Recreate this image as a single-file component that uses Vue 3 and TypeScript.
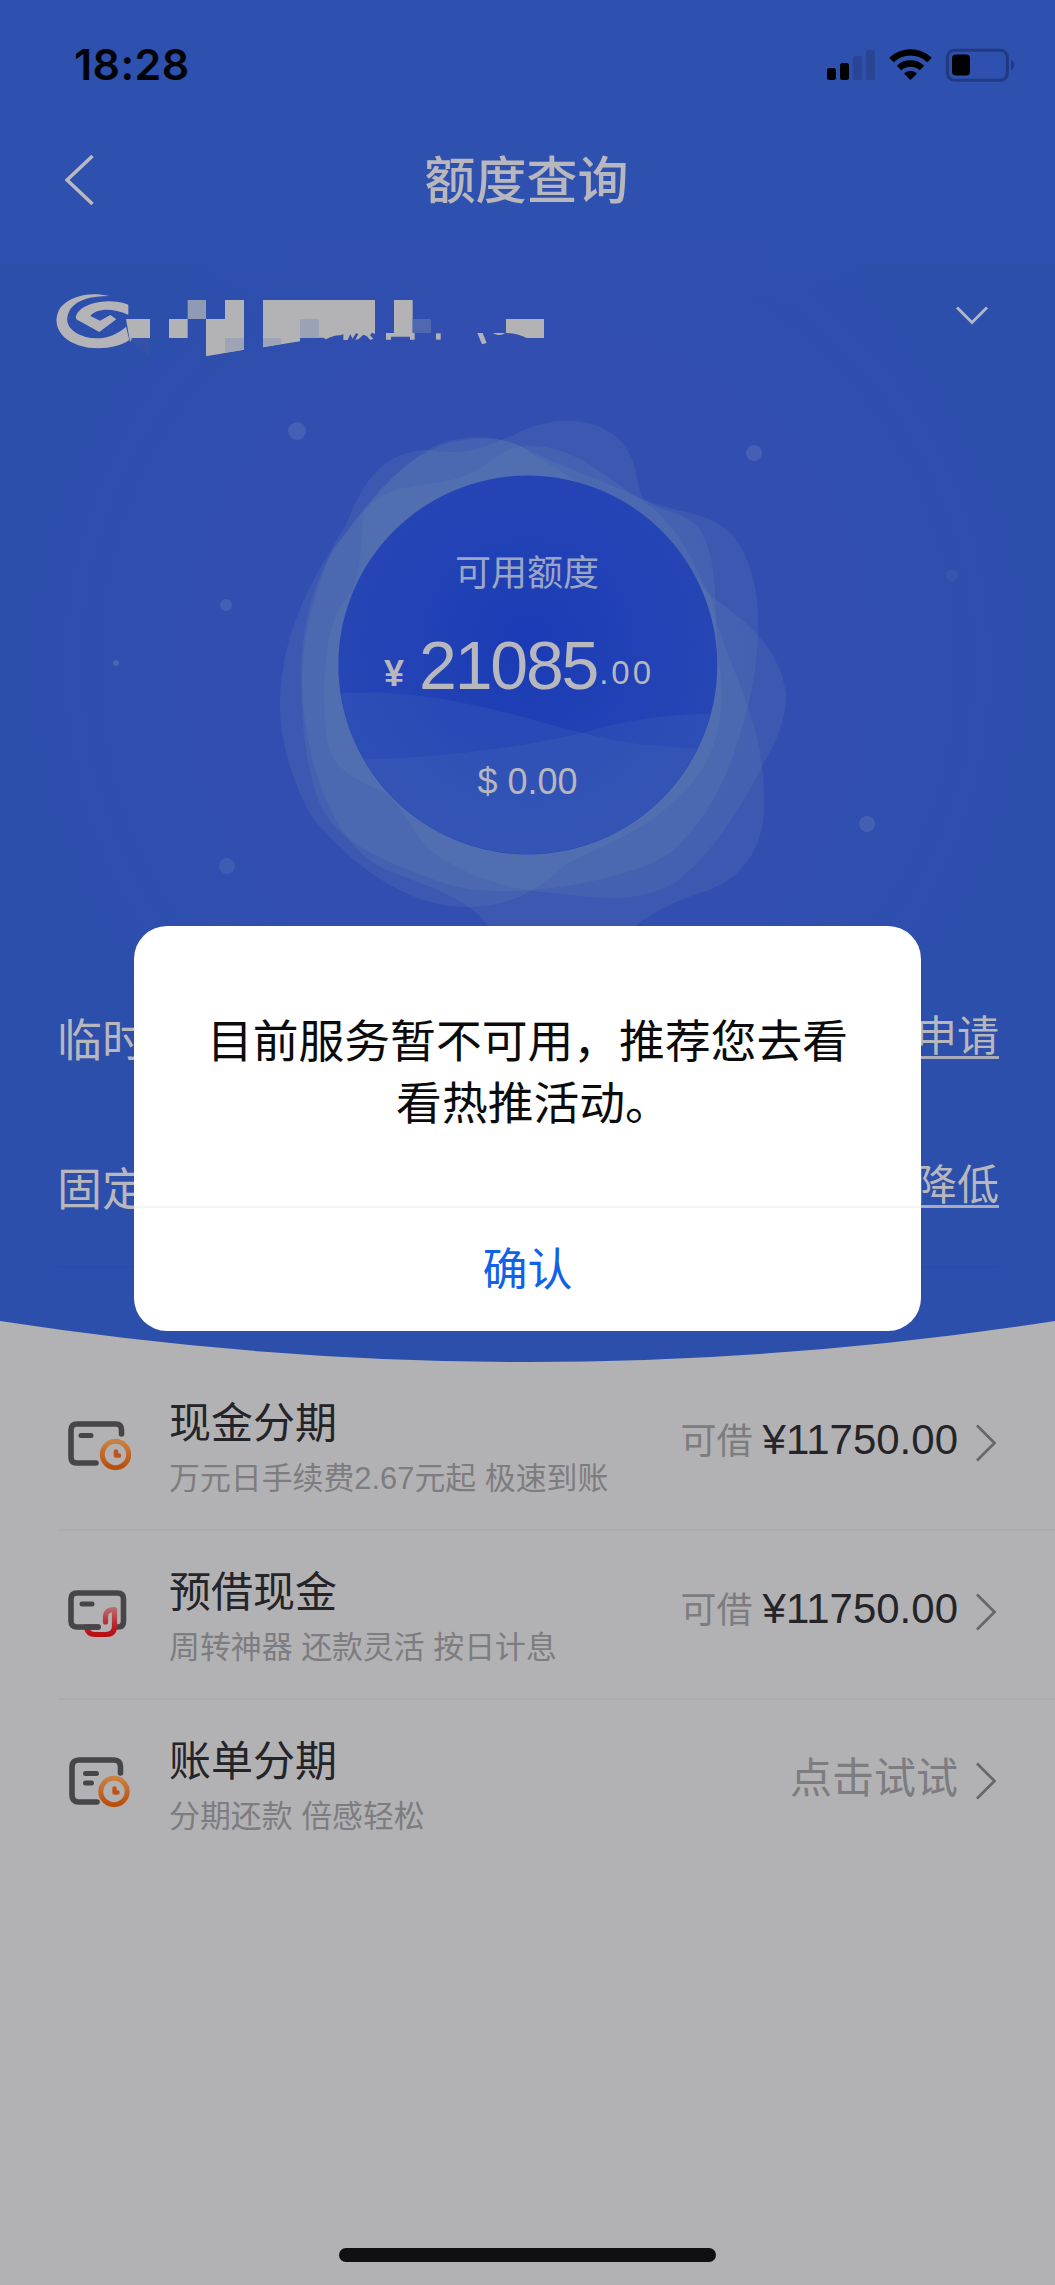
<script setup lang="ts">
interface Product {
  icon: 'cash' | 'advance' | 'bill'
  title: string
  desc: string
  amount?: string
}

const limits = [
  { label: '临时', action: '申请' },
  { label: '固定', action: '降低' },
]

const products: Product[] = [
  { icon: 'cash', title: '现金分期', desc: '万元日手续费2.67元起 极速到账', amount: '¥11750.00' },
  { icon: 'advance', title: '预借现金', desc: '周转神器 还款灵活 按日计息', amount: '¥11750.00' },
  { icon: 'bill', title: '账单分期', desc: '分期还款 倍感轻松' },
]

const dots = [
  { x: 297, y: 431, r: 9, o: 0.17 },
  { x: 754, y: 453, r: 8, o: 0.17 },
  { x: 226, y: 605, r: 6, o: 0.16 },
  { x: 952, y: 575, r: 6, o: 0.07 },
  { x: 116, y: 663, r: 3, o: 0.22 },
  { x: 227, y: 866, r: 8, o: 0.13 },
  { x: 867, y: 824, r: 8, o: 0.17 },
]
</script>

<template>
  <div class="screen">
    <section class="hero">
      <svg class="backdrop" width="1055" height="1365" viewBox="0 0 1055 1365">
        <defs>
          <radialGradient id="glow" gradientUnits="userSpaceOnUse" cx="528" cy="665" r="520">
            <stop offset="0" stop-color="#344eb3" />
            <stop offset=".6" stop-color="#324eb1" />
            <stop offset="1" stop-color="#2c4fab" />
          </radialGradient>
          <linearGradient id="bar" x1="0" y1="0" x2="0" y2="1">
            <stop offset="0" stop-color="#2e50ae" />
            <stop offset=".8" stop-color="#2e50ae" />
            <stop offset="1" stop-color="#2e50ae" stop-opacity="0" />
          </linearGradient>
          <radialGradient id="core" gradientUnits="userSpaceOnUse" cx="528" cy="645" r="210">
            <stop offset="0" stop-color="#1b3bb6" />
            <stop offset="1" stop-color="#2747b5" />
          </radialGradient>
          <clipPath id="disc"><circle cx="527.800" cy="665" r="189" /></clipPath>
        </defs>
        <path d="M0 0H1055V1321Q790 1362 528 1362T0 1321Z" fill="url(#glow)" />
        <rect width="1055" height="300" fill="url(#bar)" />
        <circle v-for="d in dots" :key="d.x" :cx="d.x" :cy="d.y" :r="d.r" fill="#a5b9d2" :opacity="d.o" />
        <g transform="translate(250 400) scale(.3571 .3448)" fill="#7591b4" fill-opacity=".155">
          <path d="M270 360C310 250 370 140 510 145C620 165 660 130 735 103C830 50 950 40 1030 110C1090 170 1075 230 1100 285C1150 330 1230 320 1265 385C1310 470 1300 580 1310 740C1340 900 1310 1050 1200 1150C1100 1260 960 1300 880 1350C790 1440 700 1480 560 1468C380 1440 250 1300 180 1220C100 1080 70 930 90 800C110 620 200 480 270 360Z" />
          <path d="M235 430C300 340 360 250 450 180C520 110 650 80 770 140C860 190 960 220 1100 288C1230 340 1300 320 1365 410C1440 530 1430 700 1405 840C1360 1050 1300 1200 1180 1310C1060 1400 700 1460 540 1400C400 1350 250 1290 200 1180C140 1040 130 800 165 640C185 560 200 500 235 430Z" />
          <path d="M320 320C390 240 460 260 570 230C680 200 680 140 780 132C900 135 970 200 1080 280C1210 360 1240 480 1290 570C1410 650 1490 740 1502 860C1495 980 1440 1040 1400 1130C1340 1230 1290 1320 1190 1400C1070 1470 950 1440 800 1425C680 1410 540 1350 480 1280C430 1200 430 1190 380 1140C300 1100 230 1080 215 980C200 850 205 700 250 600C320 540 310 400 320 320Z" />
          <path d="M235 430C300 350 400 190 510 145C560 110 720 90 780 150C990 280 1190 420 1290 570C1330 780 1440 900 1440 1170C1440 1290 1390 1390 1260 1430C1150 1470 1110 1500 1060 1540L680 1540C620 1460 580 1440 400 1370C230 1310 160 1050 145 850C135 660 180 530 235 430Z" />
        </g>
        <circle cx="527.800" cy="665" r="189.500" fill="url(#core)" />
        <g clip-path="url(#disc)">
          <g transform="translate(250 400) scale(.3571 .3448)" fill="#5276b6" fill-opacity=".17">
            <path d="M230 852C500 830 700 905 930 965C1060 1000 1170 1012 1340 1010V1400H230Z" />
            <path d="M230 1043C500 1045 750 1010 930 965C1050 930 1180 905 1340 912V1400H230Z" />
          </g>
        </g>
        <rect x="58" y="1266" width="940" height="2" fill="#284bb2" opacity=".35" />
      </svg>

      <header class="status">
        <span class="time">18:28</span>
        <svg width="190" height="36" viewBox="826 46 190 36">
          <rect x="827" y="68" width="9" height="12" rx="2.5" />
          <rect x="840" y="63" width="9" height="17" rx="2.5" />
          <g fill="#2a4594">
            <rect x="853" y="56" width="9" height="24" rx="2.5" />
            <rect x="866" y="50" width="9" height="30" rx="2.5" />
          </g>
          <g fill="none" stroke="#000" stroke-width="6.4">
            <path d="M891.5 60A27.5 27.5 0 0 1 929.5 60" />
            <path d="M899 68A17 17 0 0 1 922 68" />
          </g>
          <path d="M904 73.5A10 10 0 0 1 917 73.5L910.5 80Z" />
          <rect x="947.4" y="50.2" width="60" height="30" rx="7" fill="none" stroke="#213a82" stroke-width="3" />
          <rect x="952" y="54.500" width="18" height="21" rx="4" />
          <path d="M1011 59.500Q1018 65 1011 70.500Z" fill="#213a82" />
        </svg>
      </header>

      <nav class="nav">
        <svg width="30" height="52" viewBox="0 0 30 52"><path d="M27.500 2L2 26L27.500 50" fill="none" stroke="#b9b9bf" stroke-width="3.600" /></svg>
        <h1>额度查询</h1>
      </nav>

      <div class="account">
        <svg width="520" height="90" viewBox="0 0 1560 270">
          <path d="M207 48C150 34 90 48 62 82C30 130 60 190 145 203C195 208 240 200 268 180L258 140C225 170 180 182 137 171C85 155 68 123 93 85C115 58 155 48 207 48Z" fill="#b3b3b8" />
          <path d="M265 74C210 54 145 66 118 92C104 107 106 116 114 121L178 156L229 118L211 105L180 122L151 108C170 84 215 83 265 104Z" fill="#b3b3b8" />
          <path d="M274 174H330V228Q300 215 274 182Z" fill="#3451a8" />
          <g fill="#b3b3b5">
            <path d="M258 117H330V174H275L272 187L268 174Z" />
            <path d="M387 117H443V174H387Z" />
            <path d="M555 60H612V209L498 229V117H555Z" />
            <path d="M669 60H1005V162L996 158L990 166L1000 176L991 180L980 168L970 164L955 178L946 179L955 162L948 160L937 176L931 162L923 180H910V163L900 166Q880 166 858 178L850 173H780V184L669 202Z" />
            <path d="M1062 60H1118V159H1124V179H1110V170H1053V179H1038V159H1062Z" />
            <path d="M1188 160H1202V179H1188Z" />
            <path d="M1312 159H1328L1340 189L1326 193Z" />
            <path d="M1358 159H1396Q1378 171 1358 159Z" />
            <path d="M1398 117H1512V174H1460Q1430 159 1398 159Z" />
          </g>
          <g fill="#8f9ab5">
            <path d="M443 60H498V117H443Z" />
            <path d="M555 174H612V209L555 218Z" fill="#9ea3b6" />
            <path d="M669 174H724V192L669 201Z" fill="#9ea3b6" />
            <path d="M780 117H837V174H780Z" fill="#9aa2b6" />
            <path d="M1118 117H1173V159H1118Z" fill="#4f68af" />
          </g>
        </svg>
        <svg width="34" height="20" viewBox="0 0 34 20"><path d="M2 2.500L17 17.500L32 2.500" fill="none" stroke="#b3b8c5" stroke-width="2.800" /></svg>
      </div>

      <div class="balance">
        <span class="caption">可用额度</span>
        <div class="amount"><b>¥</b><span class="whole">21085</span><span class="cents">.00</span></div>
        <span class="usd">$ 0.00</span>
      </div>

      <div class="limits">
        <div v-for="l in limits" :key="l.label" class="limit">
          <span>{{ l.label }}</span>
          <a>{{ l.action }}</a>
        </div>
      </div>
    </section>

    <ul class="products">
      <li v-for="p in products" :key="p.title">
        <svg class="icon" :class="p.icon" width="66" height="58" viewBox="0 0 66 58" fill="none" stroke-linecap="round" stroke-linejoin="round">
          <defs>
            <linearGradient id="orange" x1="0" y1="0" x2="0" y2="1"><stop stop-color="#c98142" /><stop offset="1" stop-color="#b94f0c" /></linearGradient>
            <linearGradient id="red" gradientUnits="userSpaceOnUse" x1="0" y1="20" x2="0" y2="48"><stop stop-color="#b86868" /><stop offset=".6" stop-color="#bd2026" /><stop offset="1" stop-color="#b80c10" /></linearGradient>
          </defs>
          <template v-if="p.icon === 'cash'">
            <path d="M53.500 14V10Q53.500 4 48 4H9Q3 4 3 10V37Q3 43 9 43H28" stroke="#474549" stroke-width="5.600" />
            <path d="M13 15.500H23" stroke="#474549" stroke-width="5" />
            <circle cx="47.500" cy="34.500" r="13.200" stroke="url(#orange)" stroke-width="5" />
            <path d="M48 31.500V35.500H51" stroke="#bd5419" stroke-width="4.500" />
          </template>
          <template v-else-if="p.icon === 'advance'">
            <path d="M30 38H9Q3 38 3 32V10Q3 4 9 4H49.500Q55.500 4 55.500 10V32Q55.500 38 50 38H48" stroke="#474549" stroke-width="5.600" />
            <path d="M14 15H24" stroke="#474549" stroke-width="5" />
            <path d="M37.500 33V27Q38 20.500 46.500 20.500V38Q46 45.500 38 45.500H27Q20 45.500 18.500 39" stroke="url(#red)" stroke-width="5.200" />
            <path d="M18 38H30" stroke="#474549" stroke-width="5.600" />
          </template>
          <template v-else>
            <path d="M52.500 17V11Q52.500 4 46 4H11Q4 4 4 11V39Q4 46 11 46H29" stroke="#474549" stroke-width="5.600" />
            <path d="M17.500 17.500H28.500M17.500 27H23.500" stroke="#474549" stroke-width="5" />
            <circle cx="46" cy="35.500" r="13.200" stroke="url(#orange)" stroke-width="5" />
            <path d="M46.500 32.500V36.500H49.500" stroke="#bd5419" stroke-width="4.500" />
          </template>
        </svg>
        <div class="info">
          <strong>{{ p.title }}</strong>
          <small>{{ p.desc }}</small>
        </div>
        <div class="value">
          <template v-if="p.amount"><em>可借</em><span>{{ p.amount }}</span></template>
          <i v-else>点击试试</i>
        </div>
        <svg class="arrow" width="21" height="38" viewBox="0 0 21 38"><path d="M1 1.500L18.500 19L1 36.500" fill="none" stroke="#68686c" stroke-width="2.800" /></svg>
      </li>
    </ul>

    <div class="home"></div>

    <div class="dialog">
      <p>目前服务暂不可用，推荐您去看<br /><span class="second">看热推活动。</span></p>
      <button>确认</button>
    </div>
  </div>
</template>

<style>
body {
  background: #b2b2b4;
}
</style>

<style scoped>
.screen {
  position: relative;
  display: flex;
  flex-direction: column;
  width: 1055px;
  height: 2285px;
  overflow: hidden;
  background: #b2b2b4;
  font-family: 'Liberation Sans', 'Noto Sans CJK SC', sans-serif;
}
.hero {
  position: relative;
  height: 1362px;
  color: #b7b7bd;
}
.hero > * {
  position: relative;
}
.hero > .backdrop {
  position: absolute;
  left: 0;
  top: 0;
}
.status {
  display: flex;
  justify-content: space-between;
  align-items: center;
  height: 128px;
  padding: 0 39px 0 74px;
}
.time {
  color: #020307;
  font: 600 43px/50px Inter, sans-serif;
  letter-spacing: 0.400px;
}
.nav {
  display: flex;
  align-items: center;
  height: 104px;
  padding: 0 65px;
}
.nav h1 {
  flex: 1;
  margin: 3px 32px 0 0;
  text-align: center;
  font-size: 51px;
  font-weight: 500;
  line-height: 60px;
}
.account {
  display: flex;
  justify-content: space-between;
  align-items: center;
  height: 90px;
  margin-top: 48px;
  padding: 0 66px 20px 40px;
  box-sizing: border-box;
}
.account svg:first-child {
  margin-bottom: -20px;
}
.balance {
  display: flex;
  flex-direction: column;
  align-items: center;
  width: 380px;
  height: 380px;
  margin: 105px auto 0;
}
.caption {
  margin-top: 73px;
  margin-right: 1px;
  color: #9ba6c6;
  font-size: 36px;
  line-height: 52px;
}
.amount {
  display: flex;
  align-items: baseline;
  height: 80px;
  margin-top: 25px;
  margin-right: 17px;
  line-height: 80px;
}
.amount b {
  position: relative;
  top: -3px;
  margin-right: 15px;
  font-size: 36px;
}
.whole {
  font-size: 68px;
  letter-spacing: -2.200px;
}
.cents {
  position: relative;
  top: -5px;
  margin-left: 2px;
  font-size: 33px;
  letter-spacing: 3px;
}
.usd {
  margin-top: 54px;
  font-size: 36px;
  line-height: 46px;
}
.limits {
  margin-top: 109px;
}
.limit {
  display: flex;
  justify-content: space-between;
  align-items: center;
  height: 149px;
  padding: 0 56px 0 57px;
  font-size: 45px;
}
.limit span {
  margin-bottom: 2px;
}
.limit a {
  border-bottom: 3px solid #a9abb8;
  font-size: 42px;
  line-height: 38px;
}
.products {
  margin: 0;
  padding: 0;
  list-style: none;
}
.products li {
  display: flex;
  align-items: flex-start;
  height: 169px;
  margin-left: 58px;
  padding-left: 10px;
  box-sizing: border-box;
  border-bottom: 2px solid #adadaf;
}
.products li:last-child {
  border-color: transparent;
}
.icon {
  flex: none;
  margin-top: 58px;
}
.icon.bill {
  margin-top: 56px;
}
.info {
  display: flex;
  flex: 1;
  flex-direction: column;
  margin-left: 35px;
  padding-top: 32px;
}
.info strong {
  color: #252428;
  font-size: 42px;
  font-weight: 400;
  line-height: 60px;
}
.info small {
  margin-top: 1px;
  color: #7d7c80;
  font-size: 30.900px;
  line-height: 48px;
}
.value {
  display: flex;
  align-items: baseline;
  padding-top: 48px;
  line-height: 60px;
}
.value em {
  margin-right: 10px;
  color: #7d7c80;
  font-size: 36px;
  font-style: normal;
}
.value span {
  color: #252428;
  font-size: 42px;
}
.value i {
  padding-top: 1px;
  color: #7d7c80;
  font-size: 42px;
  font-style: normal;
}
.arrow {
  flex: none;
  margin: 62px 58px 0 18px;
}
.home {
  width: 377px;
  height: 14px;
  margin: auto auto 23px;
  border-radius: 7px;
  background: #101012;
}
.dialog {
  position: absolute;
  left: 134px;
  top: 926px;
  display: flex;
  flex-direction: column;
  width: 787px;
  height: 405px;
  border-radius: 33px;
  background: #fff;
  overflow: hidden;
}
.dialog p {
  height: 282px;
  margin: 0;
  padding-top: 86px;
  box-sizing: border-box;
  border-bottom: 2px solid #f4f4f4;
  color: #0b0b0b;
  font-size: 45.800px;
  line-height: 61.500px;
  text-align: center;
}
.dialog .second {
  margin-left: 12px;
}
.dialog button {
  flex: 1;
  padding: 0 0 7px;
  border: 0;
  background: none;
  color: #1161e9;
  font: 45px 'Liberation Sans', 'Noto Sans CJK SC', sans-serif;
}
</style>
